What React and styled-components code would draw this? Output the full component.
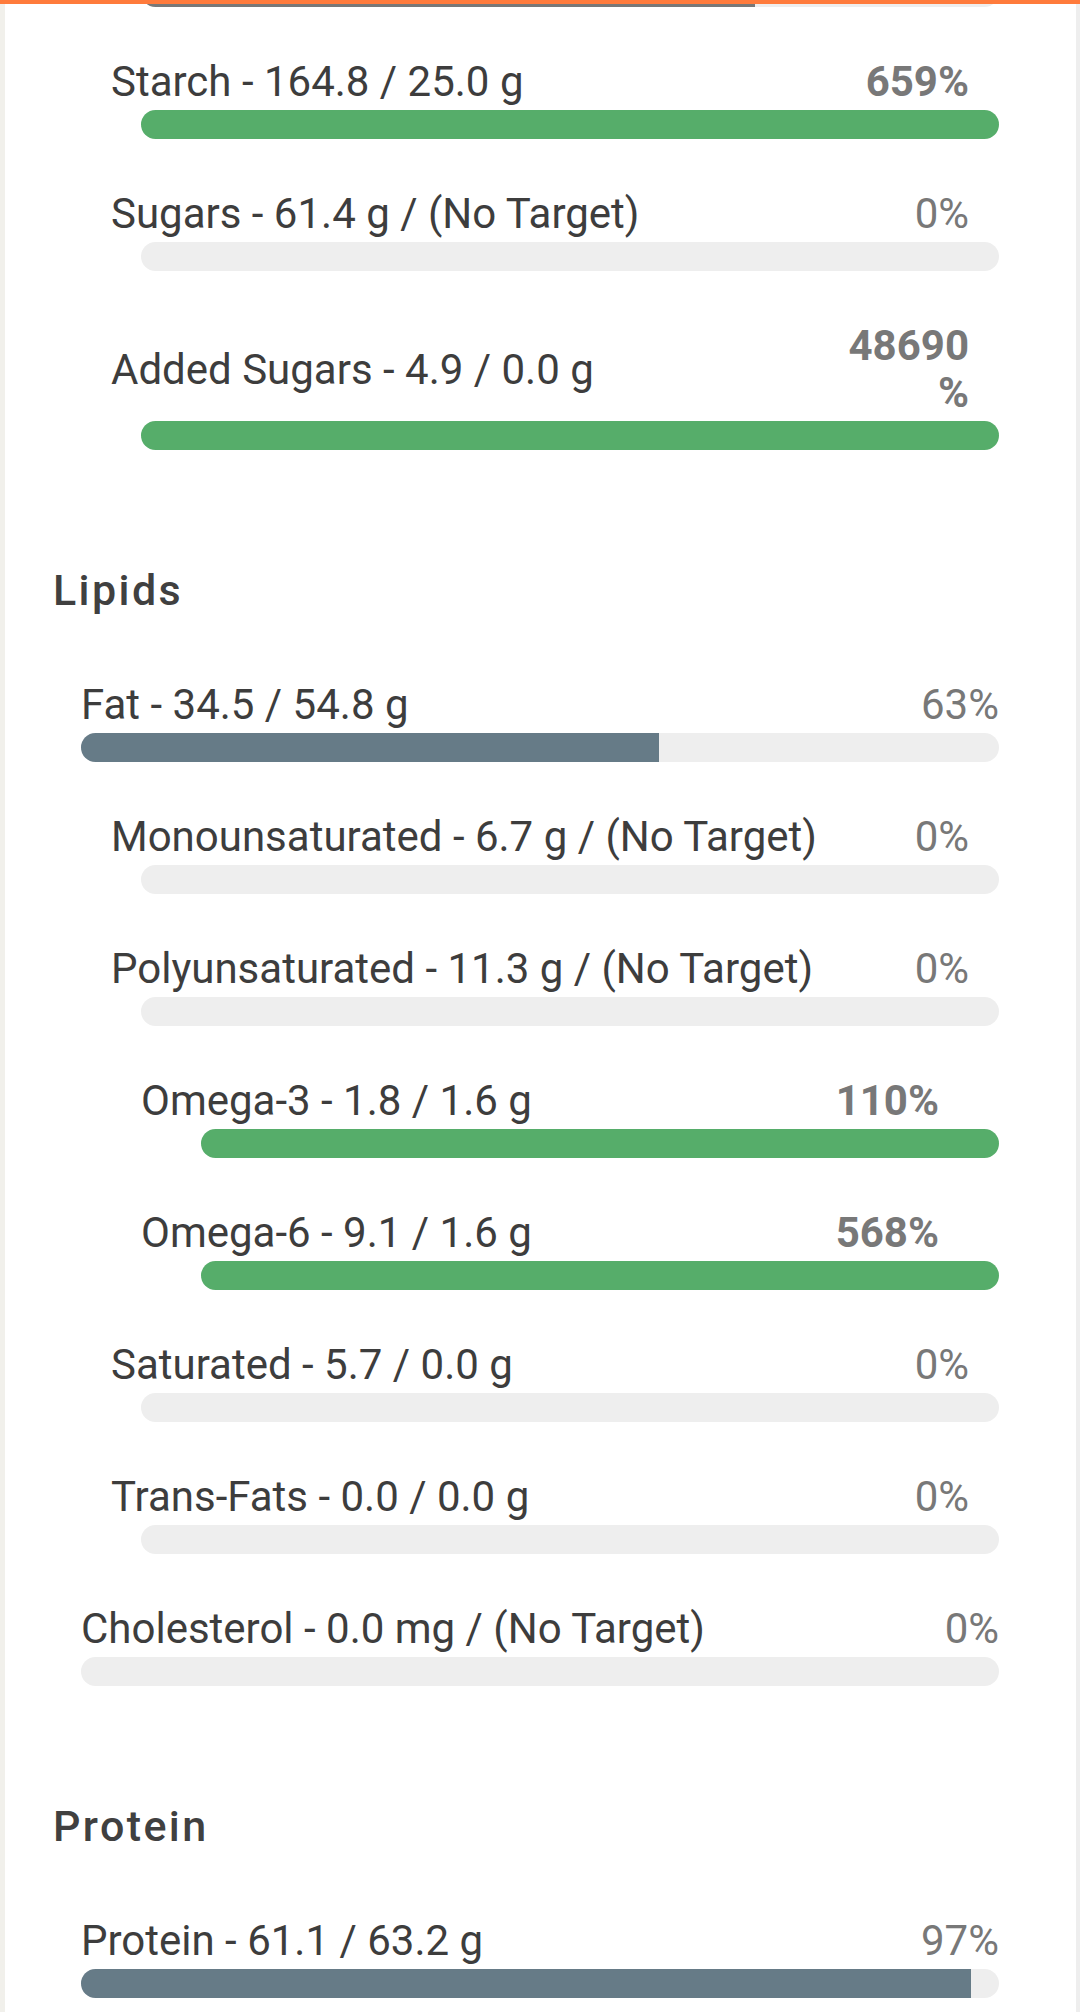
import React from "react";
import styled, { createGlobalStyle } from "styled-components";

const GlobalStyle = createGlobalStyle`
  html, body {
    margin: 0;
    padding: 0;
    background: #ffffff;
  }
  body {
    font-family: Roboto, "Noto Sans", "Liberation Sans", sans-serif;
    -webkit-font-smoothing: antialiased;
  }
`;

const TopStrip = styled.div`
  position: fixed;
  top: 0;
  left: 0;
  right: 0;
  height: 4px;
  background: #ff7b3c;
  z-index: 10;
`;

const Page = styled.div`
  min-height: 2012px;
  box-sizing: border-box;
  border-left: 5px solid #f1f0eb;
  border-right: 4px solid #eeeeee;
  padding: 0 77px 40px 48px;
  overflow: hidden;
`;

const Section = styled.section`
  display: flex;
  flex-direction: column;
`;

const Heading = styled.h2`
  margin: 115px 0 15px 0;
  font-size: 43px;
  line-height: 50px;
  font-weight: 500;
  letter-spacing: 2.4px;
  color: #404040;
`;

const List = styled.div`
  display: flex;
  flex-direction: column;
  padding-left: 28px;
`;

const Row = styled.div`
  display: flex;
  flex-direction: column;
  padding-top: 51px;
`;

const LabelLine = styled.div`
  display: flex;
  align-items: center;
  justify-content: space-between;
  gap: 20px;
  margin: 0 ${(p) => p.$level * 30}px 0 ${(p) => p.$level * 30}px;
  min-height: 47px;
`;

const Label = styled.span`
  flex: 1 1 auto;
  font-size: 42px;
  line-height: 47px;
  color: #3d3d3d;
  white-space: nowrap;
`;

const Percent = styled.span`
  flex: 0 0 auto;
  max-width: 126px;
  text-align: right;
  font-size: 42px;
  line-height: 47px;
  color: #787878;
  font-weight: ${(p) => (p.$bold ? 700 : 400)};
`;

const Track = styled.div`
  margin: 5px 0 0 ${(p) => p.$level * 60}px;
  height: 29px;
  border-radius: 15px;
  background: #eeeeee;
  overflow: hidden;
  display: flex;
`;

const Fill = styled.div`
  height: 100%;
  background: ${(p) => p.$color};
`;

const PartialTrack = styled(Track)`
  margin-top: -22px;
`;

const GREEN = "#56ad6a";
const SLATE = "#667b87";
const GREY = "#787878";

const carbs = [
  { label: "Starch - 164.8 / 25.0 g", pct: 659, level: 1 },
  { label: "Sugars - 61.4 g / (No Target)", pct: 0, level: 1 },
  { label: "Added Sugars - 4.9 / 0.0 g", pct: 48690, level: 1 },
];

const lipids = [
  { label: "Fat - 34.5 / 54.8 g", pct: 63, level: 0 },
  { label: "Monounsaturated - 6.7 g / (No Target)", pct: 0, level: 1 },
  { label: "Polyunsaturated - 11.3 g / (No Target)", pct: 0, level: 1 },
  { label: "Omega-3 - 1.8 / 1.6 g", pct: 110, level: 2 },
  { label: "Omega-6 - 9.1 / 1.6 g", pct: 568, level: 2 },
  { label: "Saturated - 5.7 / 0.0 g", pct: 0, level: 1 },
  { label: "Trans-Fats - 0.0 / 0.0 g", pct: 0, level: 1 },
  { label: "Cholesterol - 0.0 mg / (No Target)", pct: 0, level: 0 },
];

const protein = [{ label: "Protein - 61.1 / 63.2 g", pct: 97, level: 0 }];

function NutrientRow({ item }) {
  const over = item.pct >= 100;
  const width = Math.min(item.pct, 100);
  return (
    <Row>
      <LabelLine $level={item.level}>
        <Label>{item.label}</Label>
        <Percent $bold={over}>
          {item.pct}
          <wbr />%
        </Percent>
      </LabelLine>
      <Track $level={item.level}>
        {width > 0 && (
          <Fill $color={over ? GREEN : SLATE} style={{ width: `${width}%` }} />
        )}
      </Track>
    </Row>
  );
}

function Group({ title, items }) {
  return (
    <Section>
      <Heading>{title}</Heading>
      <List>
        {items.map((it) => (
          <NutrientRow key={it.label} item={it} />
        ))}
      </List>
    </Section>
  );
}

export default function App() {
  return (
    <>
      <GlobalStyle />
      <TopStrip />
      <Page>
        <Section>
          <List>
            <PartialTrack $level={1}>
              <Fill $color={GREY} style={{ width: "71.6%" }} />
            </PartialTrack>
            {carbs.map((it) => (
              <NutrientRow key={it.label} item={it} />
            ))}
          </List>
        </Section>
        <Group title="Lipids" items={lipids} />
        <Group title="Protein" items={protein} />
      </Page>
    </>
  );
}
